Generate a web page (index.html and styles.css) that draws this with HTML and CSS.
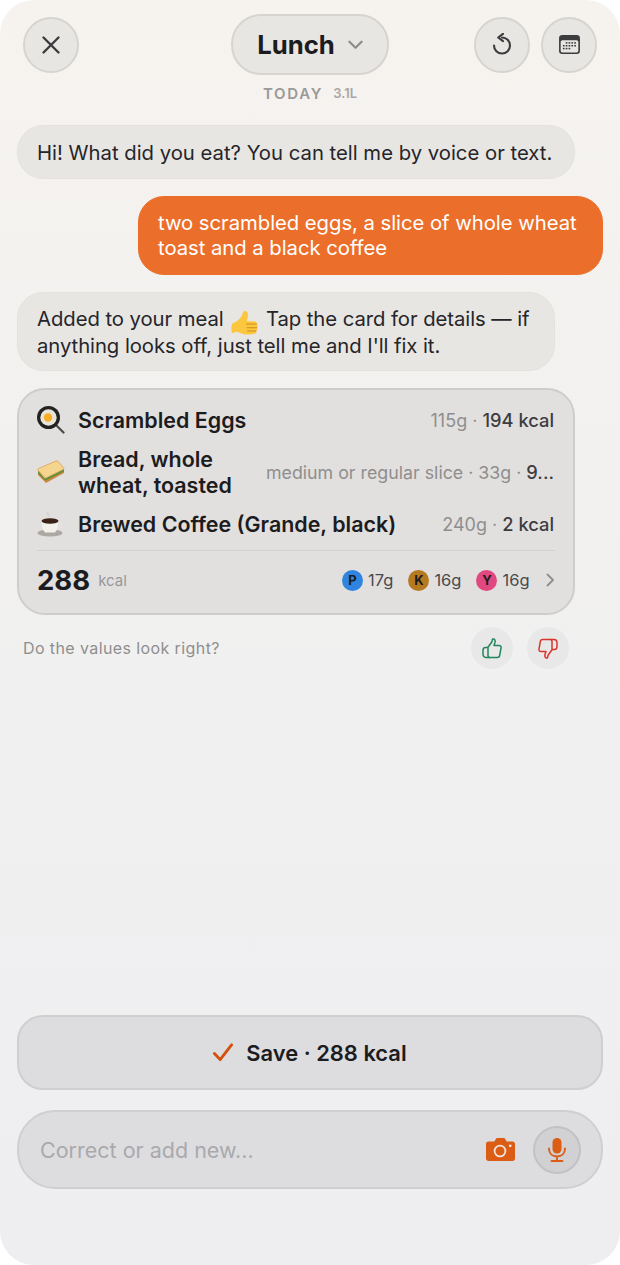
FILE: index.html
```html
<!DOCTYPE html>
<html lang="en">
<head>
    <meta charset="UTF-8">
    <title>Lunch</title>
    <link rel="stylesheet" href="styles.css">
</head>
<body>
    <div class="screen">
        <header class="top">
            <button class="round">
                <svg width="20" height="20" viewBox="0 0 20 20"><path d="M2.500 2.500 17.500 17.500M17.500 2.500 2.500 17.500" class="ink-line"/></svg>
            </button>
            <button class="meal-pill">Lunch
                <svg width="15" height="10" viewBox="0 0 16 10"><path d="M1.500 1.500 8 8l6.500-6.500" fill="none" stroke="#8e8c8a" stroke-width="2.400" stroke-linecap="round" stroke-linejoin="round"/></svg>
            </button>
            <div class="top-right">
                <button class="round">
                    <svg width="20" height="24" viewBox="0 0 20 24"><path d="M10 4.500a8 8 0 1 1-8 8" fill="none" stroke="#3c3b3d" stroke-width="2.100" stroke-linecap="round"/><path d="M11 .8 6.200 4.500 11 8.200" fill="none" stroke="#3c3b3d" stroke-width="2.100" stroke-linecap="round" stroke-linejoin="round"/></svg>
                </button>
                <button class="round">
                    <svg width="21" height="19" viewBox="0 0 22 20"><rect width="22" height="20" rx="3.500" fill="#3c3b3d"/><rect x="1.700" y="5.400" width="18.600" height="12.900" rx="1.800" fill="#e8e6e3"/><g fill="#3c3b3d"><rect x="7" y="7.500" width="1.800" height="1.600"/><rect x="10" y="7.500" width="1.800" height="1.600"/><rect x="13" y="7.500" width="1.800" height="1.600"/><rect x="16" y="7.500" width="1.800" height="1.600"/><rect x="4" y="10.500" width="1.800" height="1.600"/><rect x="7" y="10.500" width="1.800" height="1.600"/><rect x="10" y="10.500" width="1.800" height="1.600"/><rect x="13" y="10.500" width="1.800" height="1.600"/><rect x="16" y="10.500" width="1.800" height="1.600"/><rect x="4" y="13.500" width="1.800" height="1.600"/><rect x="7" y="13.500" width="1.800" height="1.600"/><rect x="10" y="13.500" width="1.800" height="1.600"/></g></svg>
                </button>
            </div>
        </header>
        <div class="day-line"><span class="day">TODAY</span><span class="water">3.1L</span></div>

        <div class="chat">
            <div class="bubble first">Hi! What did you eat? You can tell me by voice or text.</div>
            <div class="bubble mine">two scrambled eggs, a slice of whole wheat<br>toast and a black coffee</div>
            <div class="bubble third">
                <span>Added to your meal</span>
                <svg class="thumb-emoji" width="27" height="28" viewBox="0 0 27 25.500"><path d="M13 1c2.200-1 4 .8 4 3.400 0 2.600-.8 4.500-1.200 6.500L23 11c2 0 3 1.200 2.800 2.800.9 1 .9 2.500 0 3.400.6 1.100.5 2.400-.5 3.200.4 1.400-.3 2.700-1.900 3.100-3 .8-8 1.200-11.200.3-2.500-.7-4-2-6.500-2.300L1 23c-.8-2.500-.8-7 .2-9.500 4-1.500 8.300-5 10-9 .5-1.100.6-2.800 1.800-3.500z" fill="#fbc73f"/><path d="M15.500 13.800h10M16 17.500h9.800M16.500 20.800h8.500" fill="none" stroke="#d08c1c" stroke-width="1.100" stroke-linecap="round"/></svg>
                <span>Tap the card for details — if</span><br>
                <span>anything looks off, just tell me and I'll fix it.</span>
            </div>

            <section class="meal-card">
                <div class="food">
                    <svg class="food-icon" width="28" height="28" viewBox="0 0 28 28"><path d="M19 19l7.500 7.500" stroke="#4b4a4a" stroke-width="2.200" stroke-linecap="round"/><circle cx="11.500" cy="11.500" r="11.500" fill="#232223"/><circle cx="11.500" cy="11.500" r="8.200" fill="#e9e4d8"/><circle cx="11" cy="11.500" r="4.200" fill="#f9ad25"/></svg>
                    <span class="food-name">Scrambled Eggs</span>
                    <span class="food-meta">115g · <b>194 kcal</b></span>
                </div>
                <div class="food">
                    <svg class="food-icon" width="28" height="24" viewBox="0 0 28 24"><path d="M1 10 8 19 27 10v3L9 23 1 15z" fill="#c98a3f"/><path d="M1 11 8 18.500 27 9v2.500L8.500 20.500 1 13.500z" fill="#5f8f36"/><path d="M1.500 8.500 19 1c.8-.3 1.500-.2 2 .3l5.700 6.600c.5.600.3 1.100-.3 1.400L9.500 17.600c-.7.300-1.300.2-1.800-.3L1 10.300c-.5-.6-.2-1.500.5-1.800z" fill="#f5d48e" stroke="#dba255" stroke-width=".8"/></svg>
                    <span class="food-name wrap">Bread, whole wheat, toasted</span>
                    <span class="food-meta slim">medium or regular slice · 33g · <b>9...</b></span>
                </div>
                <div class="food">
                    <svg class="food-icon" width="28" height="26" viewBox="0 0 28 26"><path d="M11 1c-1.500 1.500 1.500 2.500 0 4.500" fill="none" stroke="#cfcdcb" stroke-width="1.200"/><ellipse cx="13" cy="22" rx="12.500" ry="3.500" fill="#aca8a2"/><path d="M4.500 10h17c0 5-1 9-3.500 11.500h-10C5.500 19 4.500 15 4.500 10z" fill="#f3f1ec"/><path d="M21 12c3.500-1.500 5 2.500 1 5l-2 1" fill="none" stroke="#e7e4de" stroke-width="1.700"/><ellipse cx="13" cy="10" rx="8.500" ry="2.800" fill="#3b2417"/></svg>
                    <span class="food-name">Brewed Coffee (Grande, black)</span>
                    <span class="food-meta">240g · <b>2 kcal</b></span>
                </div>
                <div class="totals">
                    <span class="total-num">288</span>
                    <span class="total-unit">kcal</span>
                    <div class="macros">
                        <span class="macro"><i class="dot blue">P</i>17g</span>
                        <span class="macro"><i class="dot brown">K</i>16g</span>
                        <span class="macro"><i class="dot pink">Y</i>16g</span>
                    </div>
                    <svg class="more" width="9" height="14" viewBox="0 0 9 14"><path d="M1.500 1.500 7 7l-5.500 5.500" fill="none" stroke="#8f8e8e" stroke-width="1.800" stroke-linecap="round" stroke-linejoin="round"/></svg>
                </div>
            </section>

            <div class="feedback">
                <span class="feedback-q">Do the values look right?</span>
                <button class="vote">
                    <svg width="20" height="21" viewBox="0 0 20 21"><path d="M6 9.300 9.800 4c.5-.9.500-1.700.6-2.500.1-.9 2.400-.8 2.700 1.200.2 1.600-.5 3.400-1.100 4.700h5c1.500 0 2.300 1.100 2 2.400l-1.300 7.600c-.2 1.400-1.100 2-2.300 2H7.500c-1 0-1.500-.6-1.500-1.500z" fill="none" stroke="#23855a" stroke-width="1.500" stroke-linejoin="round"/><path d="M6 9.500H3.500C1.800 9.500 1 10.800 1 12.300v3.500c0 2 1 3.600 3 3.600h4" fill="none" stroke="#23855a" stroke-width="1.500" stroke-linejoin="round"/></svg>
                </button>
                <button class="vote">
                    <svg class="flip" width="20" height="21" viewBox="0 0 20 21"><path d="M6 9.300 9.800 4c.5-.9.500-1.700.6-2.500.1-.9 2.400-.8 2.700 1.200.2 1.600-.5 3.400-1.100 4.700h5c1.500 0 2.300 1.100 2 2.400l-1.300 7.600c-.2 1.400-1.100 2-2.300 2H7.500c-1 0-1.500-.6-1.500-1.500z" fill="none" stroke="#d9352b" stroke-width="1.500" stroke-linejoin="round"/><path d="M6 9.500H3.500C1.800 9.500 1 10.800 1 12.300v3.500c0 2 1 3.600 3 3.600h4" fill="none" stroke="#d9352b" stroke-width="1.500" stroke-linejoin="round"/></svg>
                </button>
            </div>
        </div>

        <button class="save-btn">
            <svg width="20" height="19" viewBox="0 0 21 19"><path d="M1.500 10.500 7.500 17 19.500 1.500" fill="none" stroke="#d4500f" stroke-width="3" stroke-linecap="round" stroke-linejoin="round"/></svg>
            Save · 288 kcal
        </button>
        <div class="input-bar">
            <span class="placeholder">Correct or add new...</span>
            <svg class="camera" width="29" height="23" viewBox="0 0 29 23"><path d="M2.500 3.500h5.800l1.500-2.500c.3-.6.800-1 1.500-1h6.400c.7 0 1.200.4 1.500 1l1.500 2.500h5.800c1.500 0 2.500 1 2.500 2.500v14.500c0 1.500-1 2.500-2.500 2.500h-24C1 23 0 22 0 20.500V6c0-1.500 1-2.500 2.500-2.500z" fill="#db5c14"/><circle cx="14" cy="13" r="5.400" fill="none" stroke="#f3e4da" stroke-width="1.800"/><circle cx="24.200" cy="7.800" r="1.400" fill="#f3e4da"/></svg>
            <button class="mic-btn">
                <svg width="18" height="24" viewBox="0 0 18 24"><rect x="4.500" y="0" width="9" height="15.500" rx="4.500" fill="#db5c14"/><path d="M1 10.500c0 5 3.400 8 8 8s8-3 8-8M9 18.500v4M3.500 23h11" fill="none" stroke="#db5c14" stroke-width="1.900" stroke-linecap="round"/></svg>
            </button>
        </div>
    </div>
</body>
</html>
```

FILE: styles.css
```css
html, body {
    margin: 0;
    background: #fff;
}
body {
    font-family: 'Inter', 'Liberation Sans', sans-serif;
    color: #1c1c20;
}
button {
    font-family: inherit;
    color: inherit;
    padding: 0;
    cursor: pointer;
}
.screen {
    width: 620px;
    height: 1265px;
    box-sizing: border-box;
    padding: 14px 17px 76px;
    border-radius: 34px;
    background: linear-gradient(180deg, #f6f3ef 0%, #f2f1f0 40%, #eeeef1 100%);
    display: flex;
    flex-direction: column;
    overflow: hidden;
}
.ink-line {
    fill: none;
    stroke: #3c3b3d;
    stroke-width: 2.400;
    stroke-linecap: round;
}
.top {
    display: grid;
    grid-template-columns: 1fr auto 1fr;
    align-items: center;
    height: 61px;
    padding: 0 6px;
}
.round {
    width: 56px;
    height: 56px;
    box-sizing: border-box;
    border-radius: 50%;
    border: 2px solid #d6d4d0;
    background: #e8e6e3;
    display: flex;
    align-items: center;
    justify-content: center;
}
.top-right {
    justify-self: end;
    display: flex;
    gap: 11px;
}
.meal-pill {
    width: 158px;
    height: 61px;
    box-sizing: border-box;
    border-radius: 30px;
    border: 2px solid #d6d4d0;
    background: #e8e6e3;
    font-size: 25.700px;
    font-weight: 700;
    color: #1c1c20;
    display: flex;
    align-items: center;
    justify-content: center;
    gap: 13px;
}
.day-line {
    height: 24px;
    margin-top: 6px;
    display: flex;
    align-items: center;
    justify-content: center;
    gap: 10px;
    color: #9b9997;
    font-weight: 600;
}
.day {
    font-size: 15px;
    letter-spacing: 1.700px;
}
.water {
    font-size: 13px;
    color: #a9a7a5;
}
.chat {
    margin-top: 20px;
    flex: 1;
    display: flex;
    flex-direction: column;
    align-items: flex-start;
}
.bubble {
    box-sizing: border-box;
    padding: 13px 19px;
    font-size: 20.300px;
    line-height: 25px;
    border-radius: 26px;
    background: #e8e6e3;
    color: #25252a;
    border: 1px solid #e4e2df;
    white-space: nowrap;
}
.first {
    width: 558px;
    height: 54px;
    padding-top: 14px;
}
.mine {
    width: 465px;
    height: 79px;
    margin: 17px 0 17px auto;
    background: #eb6f2a;
    border-color: #eb6f2a;
    color: #fff;
    letter-spacing: -.04px;
}
.third {
    width: 538px;
    height: 79px;
    letter-spacing: -.06px;
}
.thumb-emoji {
    vertical-align: -7px;
    margin: -8px 2px -4px;
}
.meal-card {
    width: 558px;
    height: 227px;
    box-sizing: border-box;
    margin-top: 17px;
    padding: 4px 18px 0;
    border: 2px solid #cfcdcb;
    border-radius: 28px;
    background: #e2e0df;
}
.food {
    display: flex;
    align-items: center;
    height: 52px;
}
.food-icon {
    width: 28px;
    flex: none;
    margin-right: 13px;
}
.food-name {
    font-size: 21.450px;
    line-height: 26px;
    font-weight: 600;
    white-space: nowrap;
    flex: 1;
}
.food-name.wrap {
    white-space: normal;
    width: 170px;
}
.food-meta {
    font-size: 18px;
    margin-right: 1px;
    color: #8f8e8e;
    white-space: nowrap;
}
.food-meta.slim {
    font-size: 17.800px;
}
.food-meta b {
    font-size: 18.300px;
    font-weight: 500;
    color: #3d3c3f;
}
.totals {
    display: flex;
    align-items: center;
    height: 58px;
    border-top: 1px solid #d3d1d0;
}
.total-num {
    font-size: 27.500px;
    font-weight: 700;
}
.total-unit {
    margin-left: 8px;
    font-size: 15px;
    color: #98979a;
}
.macros {
    margin-left: auto;
    display: flex;
    gap: 15px;
}
.macro {
    display: flex;
    align-items: center;
    gap: 5px;
    font-size: 16.500px;
    color: #4a494c;
}
.dot {
    width: 21px;
    height: 21px;
    border-radius: 50%;
    font-style: normal;
    font-size: 13px;
    font-weight: 700;
    color: #1c1c20;
    display: flex;
    align-items: center;
    justify-content: center;
}
.blue { background: #2e84e0; }
.brown { background: #b5791f; }
.pink { background: #e0487f; }
.more {
    margin-left: 16.500px;
}
.feedback {
    width: 552px;
    margin-top: 12px;
    padding-left: 6px;
    box-sizing: border-box;
    display: flex;
    align-items: center;
    gap: 14px;
}
.feedback-q {
    flex: 1;
    font-size: 16px;
    letter-spacing: .4px;
    color: #8f8e8e;
}
.vote {
    width: 42px;
    height: 42px;
    border: none;
    border-radius: 50%;
    background: #e9e8e8;
    display: flex;
    align-items: center;
    justify-content: center;
}
.flip {
    transform: rotate(180deg);
}
.save-btn {
    height: 75px;
    box-sizing: border-box;
    border: 2px solid #cfcfd0;
    border-radius: 26px;
    background: #dddde0;
    font-size: 21.900px;
    font-weight: 600;
    color: #1c1c20;
    display: flex;
    align-items: center;
    justify-content: center;
    gap: 13px;
}
.input-bar {
    height: 79px;
    box-sizing: border-box;
    margin-top: 20px;
    padding: 0 20px 0 21px;
    border: 2px solid #cfcfd0;
    border-radius: 38px;
    background: #dddde0;
    display: flex;
    align-items: center;
}
.placeholder {
    flex: 1;
    font-size: 21.500px;
    color: #a9a9ac;
}
.camera {
    margin-right: 18px;
}
.mic-btn {
    width: 48px;
    height: 48px;
    box-sizing: border-box;
    border: 2px solid #c2c2c4;
    border-radius: 50%;
    background: #d1d1d3;
    display: flex;
    align-items: center;
    justify-content: center;
}
```
